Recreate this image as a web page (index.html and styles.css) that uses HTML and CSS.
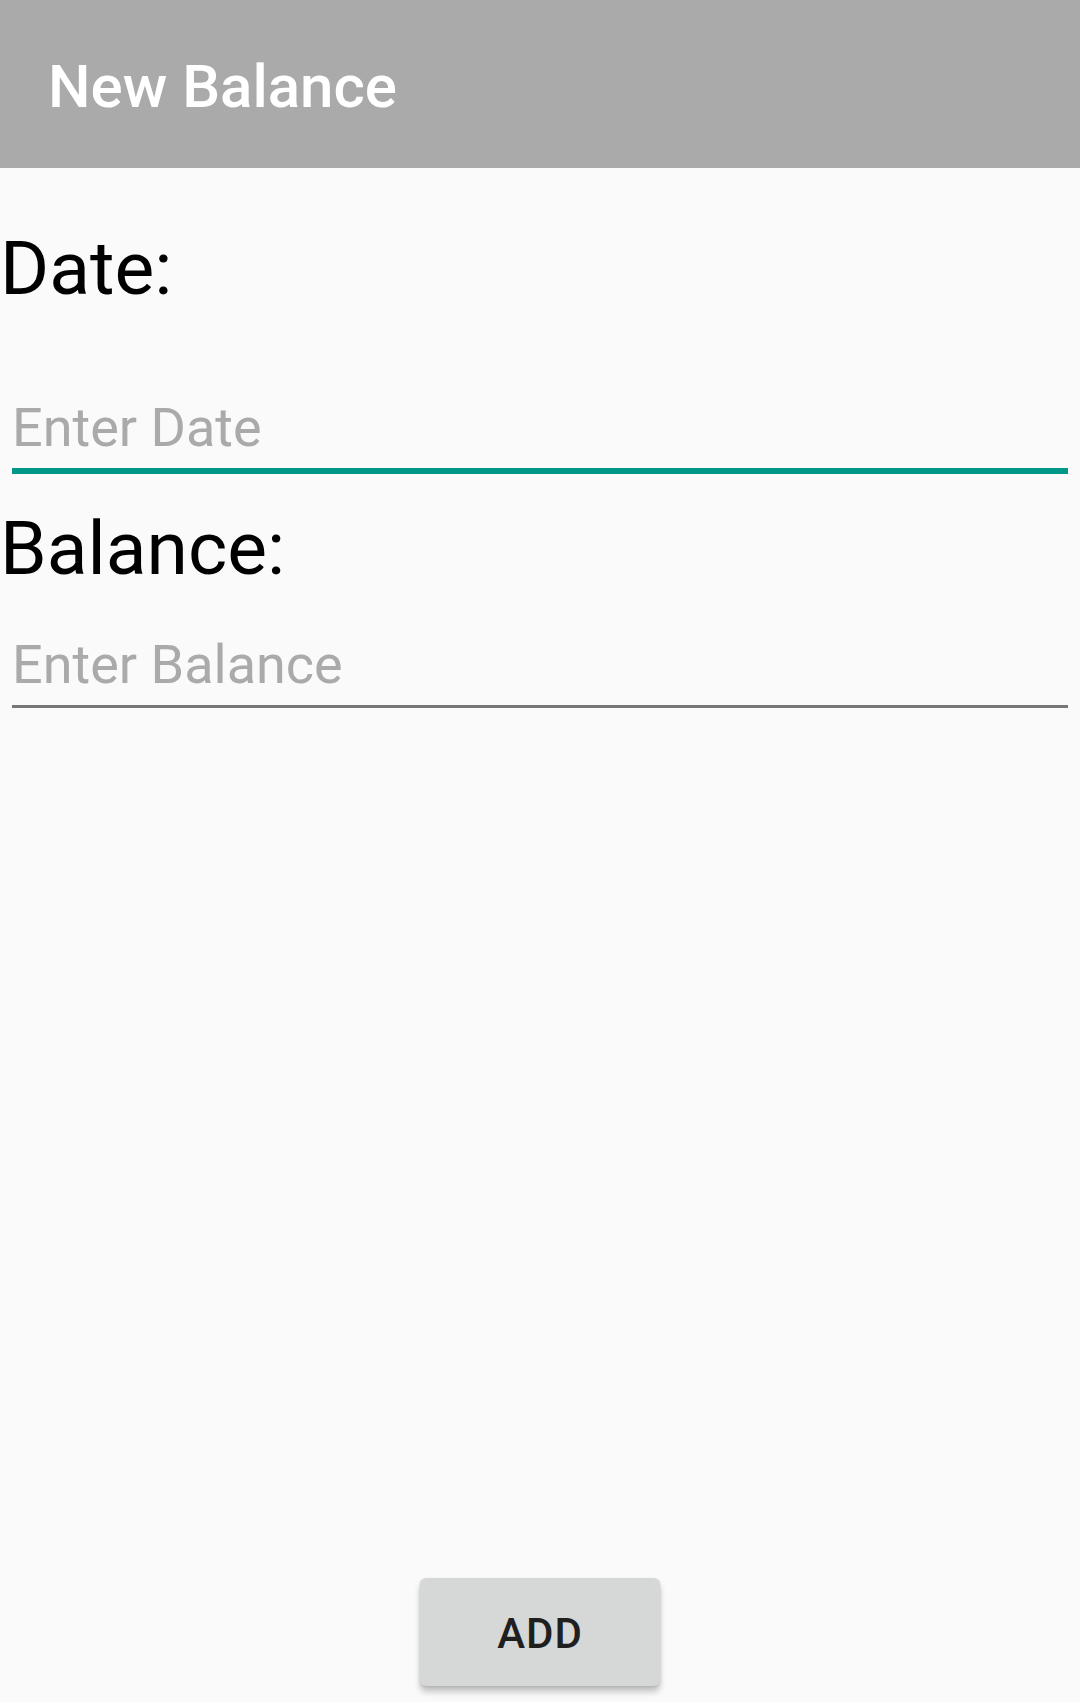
FILE: index.html
```html
<!DOCTYPE html>
<html>
<head>
<meta charset="utf-8">
<link rel="stylesheet" href="styles.css">
</head>
<body>
<div class="screen">
  <header class="toolbar"><span class="toolbar-title">New Balance</span></header>
  <main class="form">
    <div class="label label-date">Date:</div>
    <input class="field field-focused" type="text" placeholder="Enter Date">
    <div class="label label-balance">Balance:</div>
    <input class="field field-normal" type="text" placeholder="Enter Balance">
  </main>
  <div class="actions">
    <button class="btn-add">ADD</button>
  </div>
</div>
</body>
</html>
```
FILE: styles.css
```css
html, body {
  margin: 0;
  padding: 0;
  background: #fafafa;
}
.screen {
  width: 1080px;
  height: 1702px;
  display: flex;
  flex-direction: column;
  font-family: Roboto, "Liberation Sans", sans-serif;
  background: #fafafa;
}
.toolbar {
  height: 168px;
  box-sizing: border-box;
  background: #aaaaaa;
  display: flex;
  align-items: center;
  padding: 5px 0 0 48px;
}
.toolbar-title {
  color: #ffffff;
  font-size: 60px;
  font-weight: 500;
  line-height: 70px;
}
.form {
  display: flex;
  flex-direction: column;
}
.label {
  color: #000000;
  font-size: 75px;
  line-height: 92px;
}
.label-date {
  margin-top: 54px;
}
.label-balance {
  margin-top: 28px;
}
.field {
  display: block;
  margin: 0 12px;
  padding: 0 0 8px 0;
  border: none;
  background: transparent;
  outline: none;
  font-family: Roboto, "Liberation Sans", sans-serif;
  font-size: 54px;
  line-height: 64px;
  height: 64px;
  box-sizing: content-box;
  color: #000;
  width: calc(100% - 24px);
}
.field::placeholder {
  color: #aaaaaa;
}
.field-focused {
  margin-top: 82px;
  border-bottom: 6px solid #009688;
}
.field-normal {
  margin-top: 39px;
  border-bottom: 3px solid #777777;
}
.actions {
  margin-top: auto;
  display: flex;
  justify-content: center;
  padding-bottom: 16px;
}
.btn-add {
  width: 240px;
  height: 108px;
  border: none;
  border-radius: 6px;
  background: #d6d7d7;
  color: #1f1f1f;
  font-family: Roboto, "Liberation Sans", sans-serif;
  font-size: 42px;
  font-weight: 500;
  letter-spacing: 1px;
  padding: 3px 0 0 0;
  box-shadow: 0 6px 6px rgba(0, 0, 0, 0.22), 0 1px 3px rgba(0, 0, 0, 0.12);
}
```
